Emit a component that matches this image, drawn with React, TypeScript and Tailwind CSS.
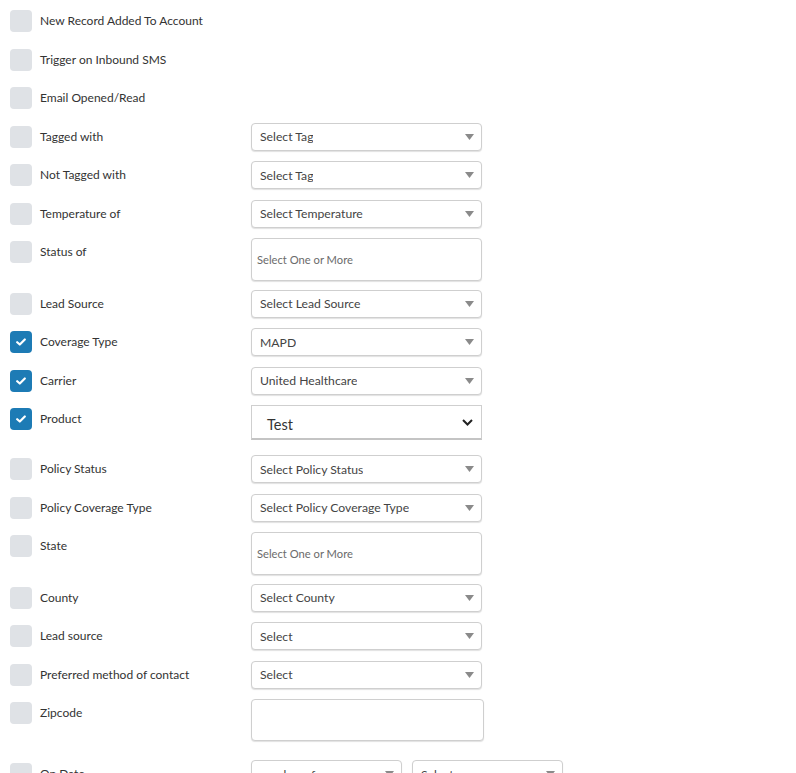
import type { JSX, ReactNode } from 'react';

type Row = {
  label: string;
  checked?: boolean;
  control?: ReactNode;
  gap?: string;
};

function Caret(): JSX.Element {
  return (
    <svg width="9" height="6" viewBox="0 0 9 6" className="shrink-0">
      <path d="M0 0 L9 0 L4.5 6 Z" fill="#8a8a8a" />
    </svg>
  );
}

function Dropdown({ text, width = 'w-[231px]' }: { text: string; width?: string }): JSX.Element {
  return (
    <div
      className={`flex h-[28px] ${width} items-center justify-between rounded-[4px] border border-[#cfcfcf] bg-white pl-2 pr-[7px] text-[12.2px] text-[#444] shadow-[0_1px_1px_rgba(0,0,0,0.12)]`}
    >
      <span className="mt-[2px] truncate">{text}</span>
      <Caret />
    </div>
  );
}

function MultiSelect(): JSX.Element {
  return (
    <div className="flex h-[43px] w-[231px] items-center rounded-[4px] border border-[#cfcfcf] bg-white pl-[5px] text-[11.2px] text-[#6b6b6b] shadow-[0_1px_1px_rgba(0,0,0,0.12)]">
      <span className="mt-[2px]">Select One or More</span>
    </div>
  );
}

function NativeSelect({ text }: { text: string }): JSX.Element {
  return (
    <div className="flex h-[35px] w-[231px] items-center justify-between border border-[#cfcfcf] border-b-2 border-b-[#c4c4c4] bg-white pl-[15px] pr-[8px] text-[14.5px] text-[#333]">
      <span className="mt-[5px]">{text}</span>
      <svg width="11" height="7" viewBox="0 0 11 7">
        <path d="M1 1 L5.5 5.5 L10 1" fill="none" stroke="#222" strokeWidth="2" />
      </svg>
    </div>
  );
}

function Checkbox({ checked }: { checked?: boolean }): JSX.Element {
  if (checked) {
    return (
      <span className="mt-[3px] flex h-[22px] w-[22px] shrink-0 items-center justify-center rounded-[4px] bg-[#1d7bb5]">
        <svg width="10" height="8" viewBox="0 0 10 8">
          <path d="M1.2 4.2 L3.8 6.5 L8.8 1.5" fill="none" stroke="#fff" strokeWidth="2.2" strokeLinecap="round" strokeLinejoin="round" />
        </svg>
      </span>
    );
  }
  return <span className="mt-[3px] h-[22px] w-[22px] shrink-0 rounded-[4px] bg-[#dfe2e6]" />;
}

const rows: Row[] = [
  { label: 'New Record Added To Account' },
  { label: 'Trigger on Inbound SMS' },
  { label: 'Email Opened/Read' },
  { label: 'Tagged with', control: <Dropdown text="Select Tag" /> },
  { label: 'Not Tagged with', control: <Dropdown text="Select Tag" /> },
  { label: 'Temperature of', control: <Dropdown text="Select Temperature" /> },
  { label: 'Status of', control: <MultiSelect />, gap: 'mb-[8.5px]' },
  { label: 'Lead Source', control: <Dropdown text="Select Lead Source" /> },
  { label: 'Coverage Type', checked: true, control: <Dropdown text="MAPD" /> },
  { label: 'Carrier', checked: true, control: <Dropdown text="United Healthcare" /> },
  { label: 'Product', checked: true, control: <NativeSelect text="Test" />, gap: 'mb-[15px]' },
  { label: 'Policy Status', control: <Dropdown text="Select Policy Status" /> },
  { label: 'Policy Coverage Type', control: <Dropdown text="Select Policy Coverage Type" /> },
  { label: 'State', control: <MultiSelect />, gap: 'mb-[8.5px]' },
  { label: 'County', control: <Dropdown text="Select County" /> },
  { label: 'Lead source', control: <Dropdown text="Select" /> },
  { label: 'Preferred method of contact', control: <Dropdown text="Select" /> },
  {
    label: 'Zipcode',
    control: <div className="h-[42px] w-[233px] rounded-[4px] border border-[#cfcfcf] bg-white shadow-[0_1px_1px_rgba(0,0,0,0.12)]" />,
    gap: 'mb-[19px]',
  },
  {
    label: 'On Date',
    control: (
      <div className="flex gap-[10px]">
        <Dropdown text="number of ..." width="w-[151px]" />
        <Dropdown text="Select" width="w-[151px]" />
      </div>
    ),
  },
];

export default function App(): JSX.Element {
  return (
    <div className="min-h-screen bg-white pl-[10px] pt-[7px] font-['Lato','Liberation_Sans',sans-serif]">
      {rows.map((r, i) => (
        <div key={i} className={`flex items-start ${r.gap ?? 'mb-[10.5px]'}`}>
          <div className="flex h-[28px] w-[241px] shrink-0 items-start gap-[8px]">
            <Checkbox checked={r.checked} />
            <span className="mt-[6px] text-[12px] leading-[16px] text-[#333]">{r.label}</span>
          </div>
          {r.control ?? <div className="h-[28px]" />}
        </div>
      ))}
    </div>
  );
}
